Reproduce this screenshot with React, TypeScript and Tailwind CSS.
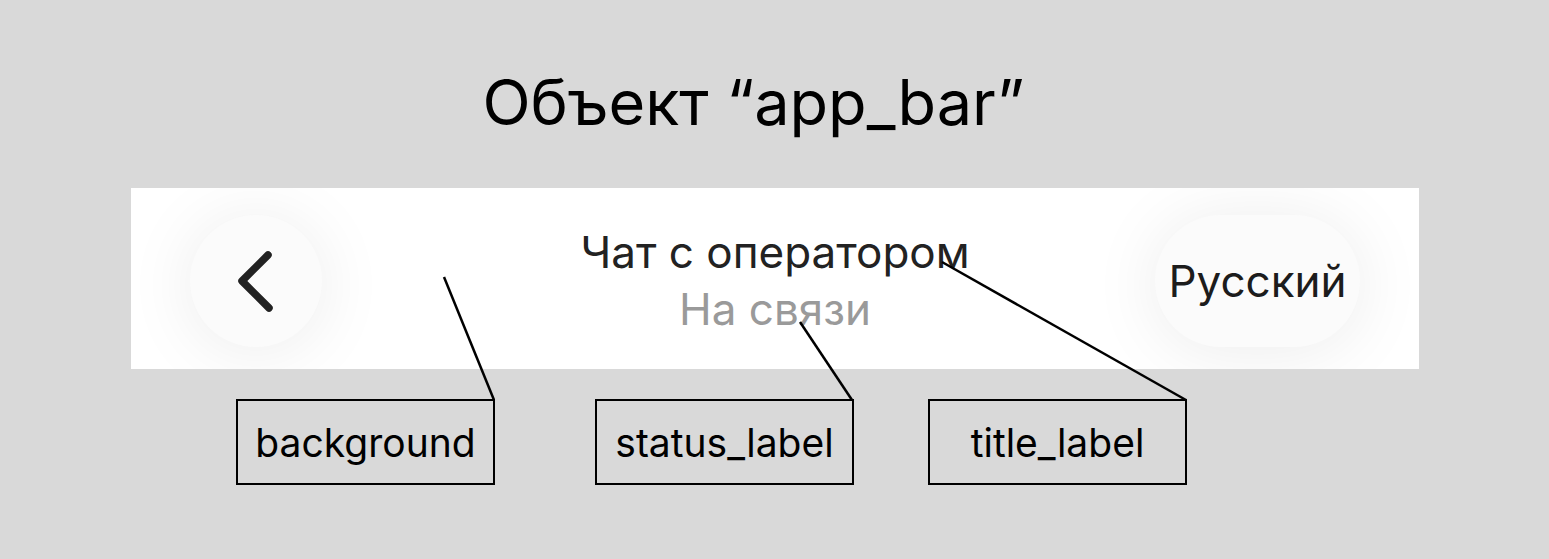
import React from "react";

function BackButton() {
  return (
    <div className="w-[132px] h-[132px] rounded-full bg-[#fbfbfb] shadow-[0_4px_70px_rgba(0,0,0,0.08)] flex items-center justify-center">
      <svg width="132" height="132" viewBox="0 0 132 132" fill="none">
        <path
          d="M78 40 L52 66 L79 93"
          stroke="#222222"
          strokeWidth="7.5"
          strokeLinecap="round"
          strokeLinejoin="round"
        />
      </svg>
    </div>
  );
}

function LanguagePill() {
  return (
    <div className="w-[205px] h-[132px] rounded-full bg-[#fbfbfb] shadow-[0_4px_70px_rgba(0,0,0,0.08)] flex items-center justify-center">
      <span className="text-[44px] leading-[44px] text-[#1c1c1c]">Русский</span>
    </div>
  );
}

function Tag({ text, className }: { text: string; className?: string }) {
  return (
    <div
      className={
        "w-[259px] h-[86px] border-[2.5px] border-black flex items-center justify-center text-[39px] leading-[39px] text-black " +
        (className ?? "")
      }
    >
      {text}
    </div>
  );
}

export default function App() {
  return (
    <div className="relative w-[1549px] h-[559px] bg-[#d9d9d9] overflow-hidden font-['Inter',sans-serif]">
      <h1 className="pt-[70px] pr-[42px] text-center text-[63px] leading-[64px] font-normal text-black">
        Объект “app_bar”
      </h1>

      <div className="mt-[54px] ml-[131px] w-[1288px] h-[181px] bg-white grid grid-cols-[1fr_auto_1fr] items-start overflow-hidden">
        <div className="pt-[27px] pl-[59px] flex justify-start">
          <BackButton />
        </div>
        <div className="pt-[42px] flex flex-col items-center">
          <span className="text-[44px] leading-[44px] text-[#222222]">Чат с оператором</span>
          <span className="mt-[13px] text-[44px] leading-[44px] text-[#9a9a9a]">На связи</span>
        </div>
        <div className="pt-[27px] pr-[59px] flex justify-end">
          <LanguagePill />
        </div>
      </div>

      <div className="mt-[30px] ml-[236px] flex">
        <Tag text="background" />
        <Tag text="status_label" className="ml-[100px]" />
        <Tag text="title_label" className="ml-[74px]" />
      </div>

      {/* leader lines from each tag up to the element it names */}
      <svg className="absolute inset-0 pointer-events-none" width="1549" height="559" viewBox="0 0 1549 559">
        <line x1="444" y1="277" x2="494" y2="400" stroke="black" strokeWidth="2.5" />
        <line x1="800" y1="322" x2="852" y2="400" stroke="black" strokeWidth="2.5" />
        <line x1="942" y1="262" x2="1186" y2="400" stroke="black" strokeWidth="2.5" />
      </svg>
    </div>
  );
}
